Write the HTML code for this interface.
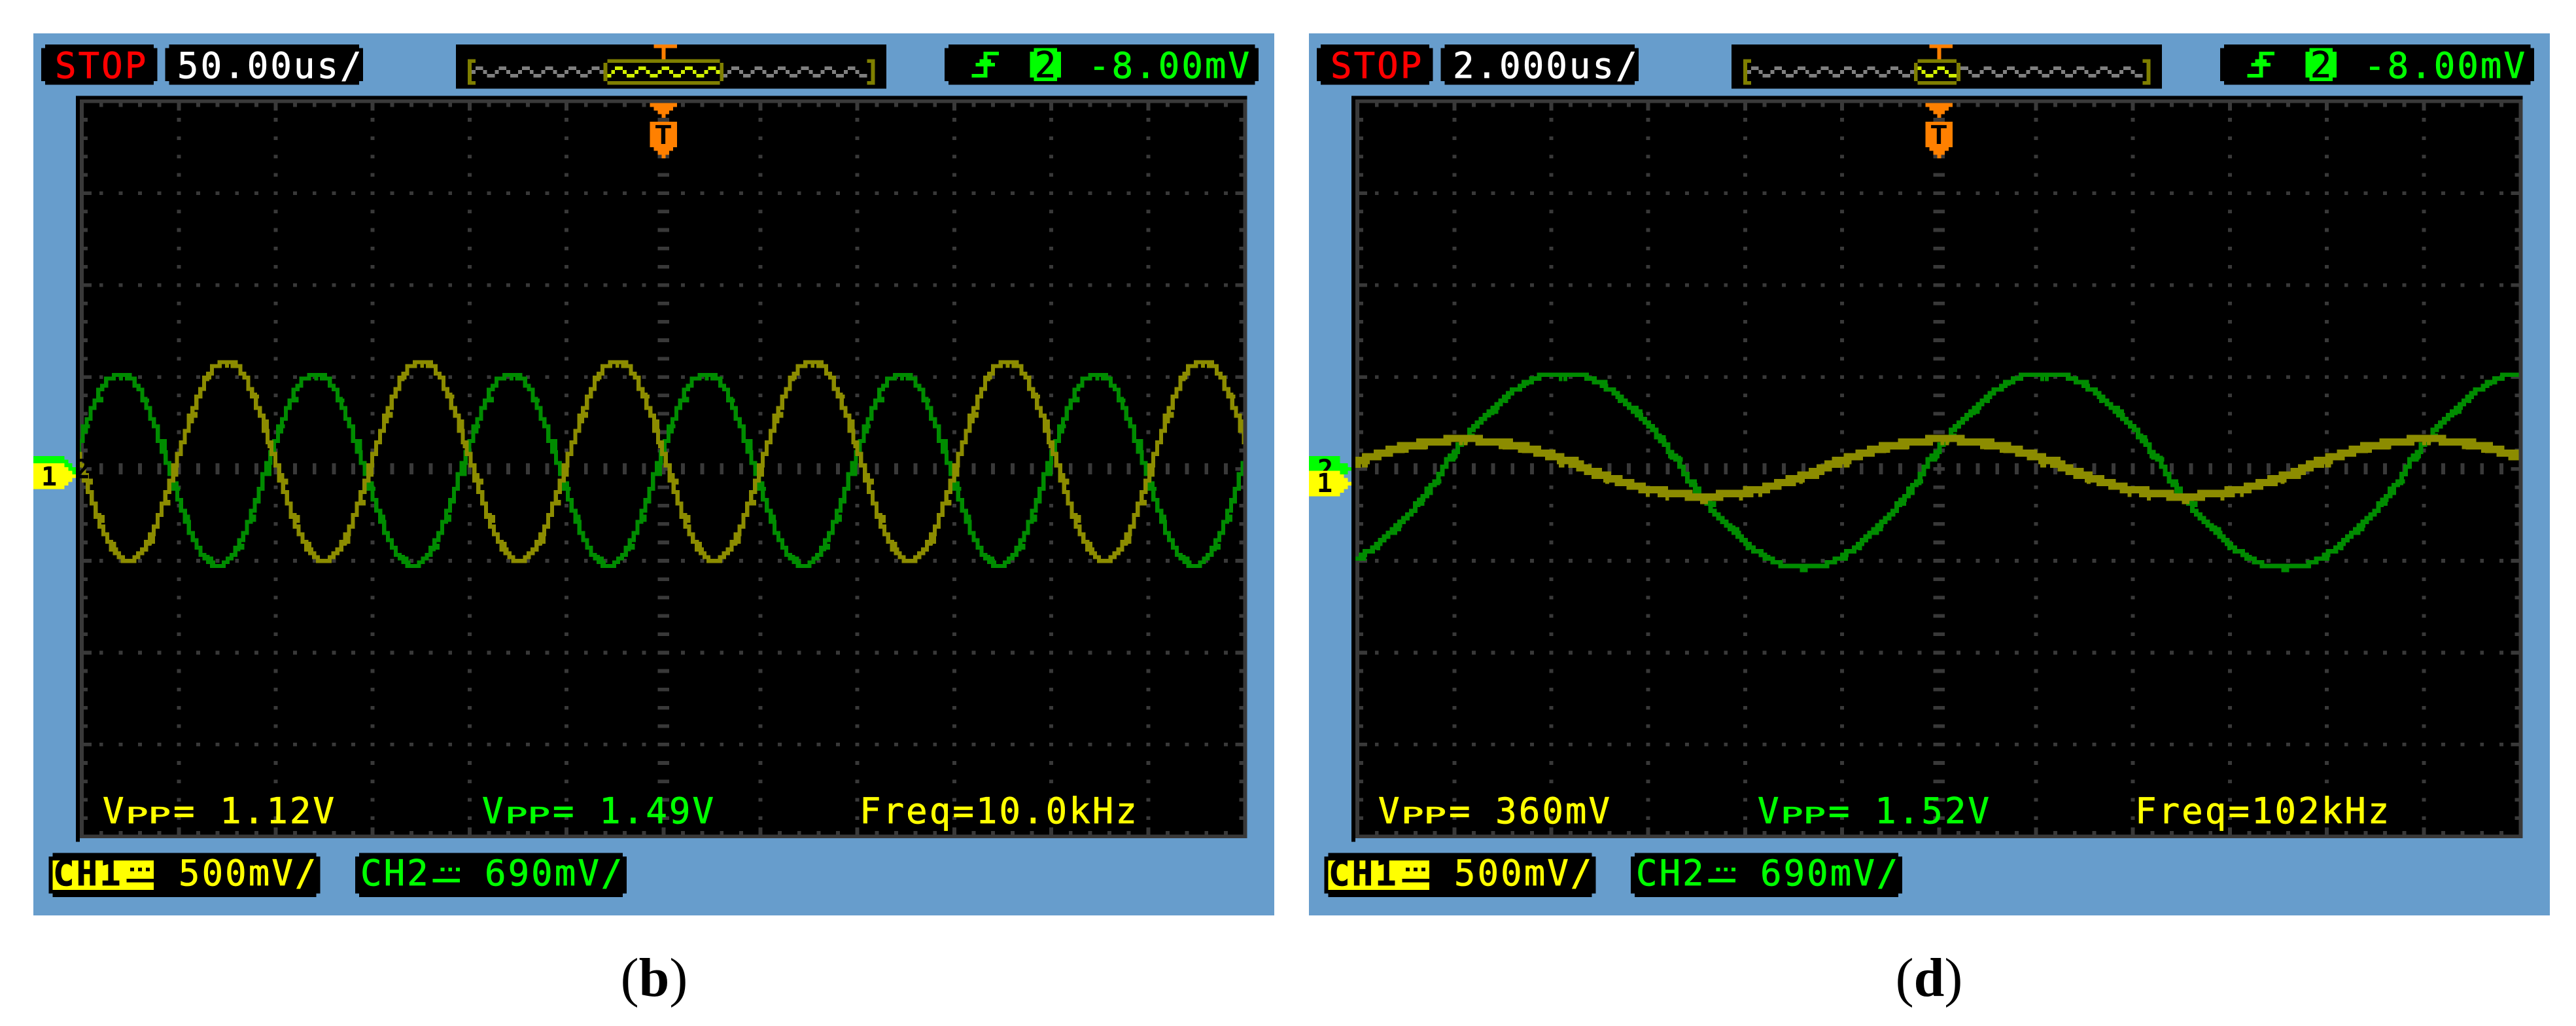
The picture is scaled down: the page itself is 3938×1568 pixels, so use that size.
<!DOCTYPE html>
<html lang="en">
<head>
<meta charset="utf-8">
<title>Oscilloscope captures (b) and (d)</title>
<style>
html,body{margin:0;padding:0;background:#fff;width:3938px;height:1568px;overflow:hidden}
svg{display:block}
text{font-family:"DejaVu Sans Mono","Liberation Mono",monospace;font-size:54px;letter-spacing:3.07px;stroke-width:.8px}
.r{fill:#ff0000;stroke:#ff0000}.w{fill:#fff;stroke:#fff}.g{fill:#00ff00;stroke:#00ff00}.y{fill:#ffff00;stroke:#ffff00}.k{fill:#000;stroke:#000}
.pp{font-size:49px;letter-spacing:0;font-variant:small-caps}
.cap{font-family:"Liberation Serif",serif;font-size:84px;letter-spacing:0;fill:#000;stroke:none}
.m{font-size:40px;letter-spacing:0;font-weight:bold;fill:#000;stroke:none}
.tt{font-family:"Liberation Mono",monospace;font-size:44px;letter-spacing:0;font-weight:bold;fill:#000;stroke:none}
</style>
</head>
<body>
<svg xmlns="http://www.w3.org/2000/svg" width="3938" height="1568" viewBox="0 0 3938 1568">
<defs>
  <clipPath id="scr"><rect x="12" y="18" width="300" height="201"/></clipPath>
  <clipPath id="w1"><rect x="148" y="8" width="29" height="5"/></clipPath>
  <clipPath id="w2"><rect x="157" y="8" width="10" height="5"/></clipPath>

  <!-- memory bar zigzag -->
  <g id="mw" fill="none">
    <path d="M114 9.5H215" stroke-dasharray="2 4"/>
    <path d="M113 10.5H215" stroke-dasharray="1 2"/>
    <path d="M117 11.5H215" stroke-dasharray="2 4"/>
  </g>

  <!-- common scope chrome -->
  <g id="chrome" shape-rendering="crispEdges">
    <rect x="0" y="0" width="320" height="240" fill="#679dcc"/>
    <g fill="#000">
      <path d="M3 3H31V4H32V13H31V14H3V13H2V4H3Z"/>
      <path d="M35 3H84V4H85V13H84V14H35V13H34V4H35Z"/>
      <rect x="109" y="3" width="111" height="12"/>
      <path d="M236 3H315V4H316V13H315V14H236V13H235V4H236Z"/>
      <path d="M5 223H73V224H74V234H73V235H5V234H4V224H5Z"/>
      <path d="M84 223H152V224H153V234H152V235H84V234H83V224H84Z"/>
      <rect x="11" y="17" width="302" height="202"/>
      <rect x="11" y="219" width="1" height="1"/>
    </g>
    <!-- memory bar -->
    <use href="#mw" stroke="#808080"/>
    <g fill="#7f7f00">
      <path d="M112 7H114V8H113V13H114V14H112Z"/>
      <path d="M215 7H217V14H215V13H216V8H215Z"/>
    </g>
    <path d="M160 3H166V4H163V7H162V4H160Z" fill="#ff8000"/>
    <!-- trigger edge icon -->
    <path fill="#00ff00" d="M245 5H249V6H246V7H247V8H248V9H246V12H242V11H245V9H243V8H244V7H245Z"/>
    <!-- channel 2 badge -->
    <path fill="#00ff00" d="M258 4H264V5H265V12H264V13H258V12H257V5H258Z"/>
    <!-- grid -->
    <g fill="none" stroke="#393939" stroke-width="1">
      <path d="M12 18.5H313M12 218.5H313M12.5 18V219M312.5 18V219"/>
      <path stroke-dasharray="1 4" d="M17 19.5H312M17 217.5H312M13.5 23V218M311.5 23V218"/>
      <path stroke-dasharray="1 24" d="M37 20.5H312M37 216.5H312M14.5 43V218M310.5 43V218"/>
      <path stroke-dasharray="1 4" d="M37.5 23V218M62.5 23V218M87.5 23V218M112.5 23V218M137.5 23V218M187.5 23V218M212.5 23V218M237.5 23V218M262.5 23V218M287.5 23V218"/>
      <path stroke-dasharray="1 4" d="M17 43.5H312M17 68.5H312M17 93.5H312M17 143.5H312M17 168.5H312M17 193.5H312"/>
      <path stroke-dasharray="1 4" stroke-width="3" d="M17 118.5H312"/>
      <path stroke-dasharray="1 4" stroke-width="3" d="M162.5 23V218"/>
    </g>
    <!-- CH1 / CH2 badges -->
    <rect x="5" y="225" width="26" height="8" fill="#ffff00"/>
    <g fill="#000">
      <rect x="24" y="230" width="7" height="1"/>
      <rect x="25" y="227" width="1" height="1"/><rect x="27" y="227" width="1" height="1"/><rect x="29" y="227" width="1" height="1"/>
    </g>
    <g fill="#00ff00">
      <rect x="103" y="230" width="7" height="1"/>
      <rect x="105" y="227" width="1" height="1"/><rect x="107" y="227" width="1" height="1"/><rect x="109" y="227" width="1" height="1"/>
    </g>
  </g>

  <!-- orange trigger marker -->
  <path id="tm" fill="#ff8000" d="M159 19H166V20H165V21H164V22H163V23H162V22H161V21H160V20H159Z M159 24H166V31H165V32H164V33H163V34H162V33H161V32H160V31H159Z"/>

  <!-- left panel trace: one period -->
  <path id="s" fill="none" d="M0-26h2v1h2v2h1v1h1v3h1v2h1v3h1v2h1v4h1v3h1v3h1v3h1v4h1v3h1v3h1v3h1v3h1v2h1v2h1v2h1v1h1v1h1v1h3v-1h1v-1h1v-1h1v-2h1v-2h1v-2h1v-3h1v-3h1v-3h1v-3h1v-4h1v-3h1v-3h1v-3h1v-4h1v-2h1v-3h1v-2h1v-3h1v-1h1v-2h2v-1h2"/>
  <g id="sr">
    <use href="#s"/><use href="#s" x="50.35"/><use href="#s" x="100.7"/><use href="#s" x="151.05"/>
    <use href="#s" x="201.4"/><use href="#s" x="251.75"/><use href="#s" x="302.1"/>
  </g>

  <!-- right panel traces: quarter periods -->
  <path id="gq" fill="none" d="M0-26h6v1h2v1h2v1h1v1h2v1h1v1h1v1h1v1h1v1h1v1h1v1h1v1h1v1h1v1h1v1h1v2h1v1h1v1h1v2h1v1h1v1h1v2h1v1"/>
  <g id="gp">
    <use href="#gq"/>
    <use href="#gq" transform="translate(62 0) scale(-1 -1)"/>
    <use href="#gq" transform="translate(62 0) scale(1 -1)"/>
    <use href="#gq" transform="translate(124 0) scale(-1 1)"/>
  </g>
  <g id="gr"><use href="#gp"/><use href="#gp" x="124.2"/><use href="#gp" x="248.4"/><use href="#gp" x="372.6"/></g>

  <path id="yq" fill="none" d="M0-8h4v1h7v1h5v1h3v1h3v1h3v1h3v1h2v1h1"/>
  <g id="yp">
    <use href="#yq"/>
    <use href="#yq" transform="translate(62 0) scale(-1 -1)"/>
    <use href="#yq" transform="translate(62 0) scale(1 -1)"/>
    <use href="#yq" transform="translate(124 0) scale(-1 1)"/>
  </g>
  <g id="yr"><use href="#yp"/><use href="#yp" x="124.2"/><use href="#yp" x="248.4"/><use href="#yp" x="372.6"/></g>
</defs>

<rect width="3938" height="1568" fill="#fff"/>

<!-- ============ PANEL (b) ============ -->
<g transform="translate(51 51) scale(5.928 5.617)" shape-rendering="crispEdges">
  <use href="#chrome"/>
  <use href="#mw" stroke="#d2f000" clip-path="url(#w1)"/>
  <path fill="#7f7f00" d="M148 7H177V8H148ZM148 13H177V14H148ZM147 8H148V13H147ZM177 8H178V13H177Z"/>
  <g clip-path="url(#scr)" stroke-width="1.05">
    <g stroke="#008c00">
      <use href="#sr" transform="translate(-28.25 118.9)"/>
      <use href="#sr" transform="translate(-27.45 118.9)" stroke-dasharray="3 9 2 14 4 11"/>
      <use href="#sr" transform="translate(-28.25 119.9)" stroke-dasharray="1 37 1 29"/>
    </g>
    <g stroke="#8c8c00">
      <use href="#sr" transform="translate(-0.95 116.5) scale(1 1.04)"/>
      <use href="#sr" transform="translate(-0.15 116.5) scale(1 1.04)" stroke-dasharray="4 11 2 8 3 15"/>
      <use href="#sr" transform="translate(-0.95 117.5) scale(1 1.04)" stroke-dasharray="1 31 1 23"/>
    </g>
  </g>
  <use href="#tm"/>
  <path fill="#00ff00" d="M0 115H8V116H9V117H10V118H11V120H0Z"/>
</g>
<text class="m" x="126" y="731" text-anchor="middle">2</text>
<g transform="translate(51 51) scale(5.928 5.617)" shape-rendering="crispEdges">
  <path fill="#ffff00" d="M0 117H8V118H9V119H10V120H11V121H10V122H9V123H8V124H0Z"/>
</g>
<text class="m" x="75" y="742" text-anchor="middle">1</text>
<text class="tt" x="1014" y="220" text-anchor="middle">T</text>

<text class="r" x="84" y="119">STOP</text>
<text class="w" x="271" y="119">50.00us/</text>
<text class="g" x="1664" y="119">-8.00mV</text>
<text class="k" x="1598" y="118" text-anchor="middle" style="letter-spacing:0">2</text>

<text class="y" x="157" y="1258">V</text><text class="y pp" x="192" y="1258" textLength="69" lengthAdjust="spacingAndGlyphs">pp</text><text class="y" x="265" y="1258">= 1.12V</text>
<text class="g" x="737" y="1258">V</text><text class="g pp" x="772" y="1258" textLength="69" lengthAdjust="spacingAndGlyphs">pp</text><text class="g" x="845" y="1258">= 1.49V</text>
<text class="y" x="1314" y="1258">Freq=10.0kHz</text>

<text class="k" x="81" y="1353" style="font-weight:bold">CH1</text>
<text class="y" x="273" y="1353">500mV/</text>
<text class="g" x="551" y="1353">CH2</text>
<text class="g" x="741" y="1353">690mV/</text>

<text class="cap" x="1000" y="1522" text-anchor="middle">(<tspan font-weight="bold">b</tspan>)</text>

<!-- ============ PANEL (d) ============ -->
<g transform="translate(2001 51) scale(5.928 5.617)" shape-rendering="crispEdges">
  <use href="#chrome"/>
  <use href="#mw" stroke="#d2f000" clip-path="url(#w2)"/>
  <path fill="#7f7f00" d="M157 7H167V8H157ZM157 13H167V14H157ZM156 8H157V13H156ZM167 8H168V13H167Z"/>
  <g clip-path="url(#scr)">
    <g stroke="#008c00" stroke-width="1.2">
      <use href="#gr" transform="translate(-58.6 118.9)"/>
      <use href="#gr" transform="translate(-57.8 118.9)" stroke-dasharray="3 8 2 13 4 10"/>
      <use href="#gr" transform="translate(-58.6 120)" stroke-dasharray="1 19 1 27 2 13"/>
    </g>
    <g stroke="#8c8c00" stroke-width="2">
      <use href="#yr" transform="translate(-84.3 118.2)"/>
      <use href="#yr" transform="translate(-83.6 118.2)" stroke-dasharray="4 7 3 11 2 6"/>
      <use href="#yr" transform="translate(-84.3 119.6)" stroke-dasharray="1 9 1 5 1 13 2 7" stroke-width="1"/>
    </g>
  </g>
  <use href="#tm"/>
  <path fill="#00ff00" d="M0 115H8V117H10V118H11V119H10V120H0Z"/>
</g>
<text class="m" x="2026" y="731" text-anchor="middle">2</text>
<g transform="translate(2001 51) scale(5.928 5.617)" shape-rendering="crispEdges">
  <path fill="#ffff00" d="M0 119H8V120H9V121H10V122H11V123H10V124H9V125H8V126H0Z"/>
</g>
<text class="m" x="2025" y="752" text-anchor="middle">1</text>
<text class="tt" x="2964" y="220" text-anchor="middle">T</text>

<text class="r" x="2034" y="119">STOP</text>
<text class="w" x="2221" y="119">2.000us/</text>
<text class="g" x="3614" y="119">-8.00mV</text>
<text class="k" x="3548" y="118" text-anchor="middle" style="letter-spacing:0">2</text>

<text class="y" x="2107" y="1258">V</text><text class="y pp" x="2142" y="1258" textLength="69" lengthAdjust="spacingAndGlyphs">pp</text><text class="y" x="2215" y="1258">= 360mV</text>
<text class="g" x="2687" y="1258">V</text><text class="g pp" x="2722" y="1258" textLength="69" lengthAdjust="spacingAndGlyphs">pp</text><text class="g" x="2795" y="1258">= 1.52V</text>
<text class="y" x="3264" y="1258">Freq=102kHz</text>

<text class="k" x="2031" y="1353" style="font-weight:bold">CH1</text>
<text class="y" x="2223" y="1353">500mV/</text>
<text class="g" x="2501" y="1353">CH2</text>
<text class="g" x="2691" y="1353">690mV/</text>

<text class="cap" x="2949" y="1522" text-anchor="middle">(<tspan font-weight="bold">d</tspan>)</text>
</svg>
</body>
</html>
